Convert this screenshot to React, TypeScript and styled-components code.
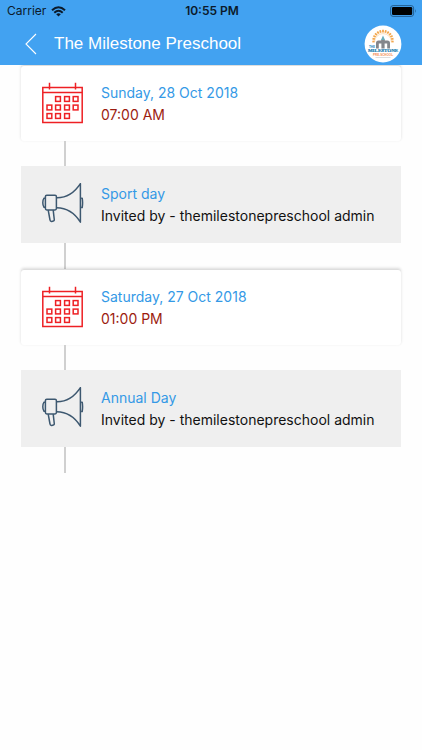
import React from 'react';
import styled, { createGlobalStyle } from 'styled-components';

const GlobalStyle = createGlobalStyle`
  * { box-sizing: border-box; }
  body {
    margin: 0;
    background: #fefefe;
    font-family: Inter, "Liberation Sans", sans-serif;
  }
`;

const Header = styled.header`
  background: #42a2f1;
  position: relative;
  z-index: 1;
`;

const StatusBar = styled.div`
  display: grid;
  grid-template-columns: 1fr auto 1fr;
  align-items: center;
  height: 22px;
  padding: 0 5px 0 7px;
  font-size: 12px;
  line-height: 22px;
  color: #0b1a2b;
`;

const Carrier = styled.span`
  display: flex;
  align-items: center;
  gap: 5px;
`;

const Clock = styled.time`
  font-weight: 600;
`;

const BatteryIcon = styled.svg`
  justify-self: end;
`;

const NavBar = styled.div`
  display: flex;
  align-items: center;
  height: 43px;
  padding: 0 20px 0 21px;
`;

const BackButton = styled.button`
  display: flex;
  padding: 0;
  border: 0;
  background: none;
  color: #fff;
  cursor: pointer;
`;

const Title = styled.h1`
  flex: 1;
  margin: 0 0 0 13px;
  font: 400 17px/22px "Liberation Sans", Arial, sans-serif;
  color: #fff;
`;

const Logo = styled.svg`
  flex: none;
`;

const Timeline = styled.ol`
  list-style: none;
  margin: 0;
  padding: 0 21px;
`;

const Entry = styled.li<{ $raised?: boolean }>`
  &::after {
    content: '';
    display: block;
    width: 2px;
    height: ${(p) => (p.$raised ? 25 : 26)}px;
    margin-left: 43px;
    background: #d0d0d0;
  }
`;

const Card = styled.article<{ $raised?: boolean }>`
  display: flex;
  gap: 17px;
  padding: 17px 21px 13px;
  min-height: ${(p) => (p.$raised ? 76 : 77)}px;
  background: ${(p) => (p.$raised ? '#fff' : '#efefef')};
  border-radius: ${(p) => (p.$raised ? 3 : 0)}px;
  box-shadow: ${(p) =>
    p.$raised ? 'inset 0 1px 0 #dedede, 0 -1px 3px rgba(0, 0, 0, 0.14)' : 'none'};
`;

const CardIcon = styled.svg`
  flex: none;
  width: 42px;
  height: 42px;
  fill: none;
`;

const Details = styled.div`
  font-size: 14px;
  line-height: 22px;
`;

const Heading = styled.h2`
  margin: 0;
  font: inherit;
  color: #3499e6;
`;

const Line = styled.p<{ $color: string }>`
  margin: 0;
  color: ${(p) => p.$color};
`;

const dots = [
  [16, 17], [25, 17], [33.6, 17],
  [7.4, 25.5], [16, 25.5], [25, 25.5], [33.6, 25.5],
  [7.4, 34], [16, 34], [25, 34],
];

const CalendarIcon = () => (
  <CardIcon viewBox="0 0 42 42" stroke="#ee2024" strokeWidth="1.5" aria-hidden="true">
    <path d="M.8 5.6H40.2V40.6H.8ZM.8 10.4H40.2M7.5 .8V7.5M33.5 .8V7.5" />
    {dots.map(([x, y]) => (
      <rect key={`${x}-${y}`} x={x - 2.4} y={y - 2.4} width="4.8" height="4.8" />
    ))}
  </CardIcon>
);

const MegaphoneIcon = () => (
  <CardIcon viewBox="0 0 42 42" stroke="#3d5870" strokeWidth="1.5" strokeLinejoin="round" aria-hidden="true">
    <rect x="3.4" y="12.2" width="11" height="14.8" rx="1.4" />
    <path d="M3.2 15.2H2Q.8 17 .8 19.8T2 24.2H3.2M14.6 14.8C25 15 33 9 38.4 .7V39.2C33 30.5 25 25 14.6 24.8M39.2 15.2H40.2Q41 19.8 40.2 24.6H39.2" />
    <path d="M6.2 27.2L8 37Q8.2 38.6 9.8 38.4L11.4 38.1Q12.4 37.8 12.3 36.8L11.2 27.2" />
  </CardIcon>
);

const rays = Array.from({ length: 13 }, (_, i) => -96 + i * 16);

const SchoolLogo = () => (
  <Logo width="38" height="38" viewBox="0 0 38 38" role="img" aria-label="The Milestone Preschool">
    <circle cx="19" cy="19" r="18.4" fill="#fff" />
    {rays.map((a) => (
      <path key={a} d="M19 7.4V4.8" stroke="#f3a64b" strokeWidth="1.8" transform={`rotate(${a} 19 15.5)`} />
    ))}
    <path d="M10.6 17A8.4 8.4 0 0 1 27.4 17" fill="none" stroke="#f9d4a4" strokeWidth=".7" />
    <path d="M12 23.6V18Q12 15.5 14.5 15.5H17L19 12.5L21 15.5H23.5Q26 15.5 26 18V23.6H23.2V18.6H20.6V23.6H17.4V18.6H14.8V23.6Z" fill="#83868b" />
    <path d="M19 10.5L21 15H17Z" fill="#68aebb" />
    <text x="5" y="22.8" fontFamily="Liberation Sans" fontSize="3" fontWeight="700" fill="#2185ba">THE</text>
    <text x="19" y="27.4" textAnchor="middle" fontFamily="Liberation Serif" fontSize="5" fontWeight="700" fill="#1479ae" stroke="#1479ae" strokeWidth=".2">MILESTONE</text>
    <text x="19" y="31" textAnchor="middle" fontFamily="Liberation Sans" fontSize="3" fontWeight="700" fill="#f48a50">PRE-SCHOOL</text>
    <path d="M11.5 32.5H26.5" stroke="#c8c8c8" strokeWidth=".6" />
  </Logo>
);

type Item = { kind: 'date' | 'event'; heading: string; detail: string };

const items: Item[] = [
  { kind: 'date', heading: 'Sunday, 28 Oct 2018', detail: '07:00 AM' },
  { kind: 'event', heading: 'Sport day', detail: 'Invited by - themilestonepreschool admin' },
  { kind: 'date', heading: 'Saturday, 27 Oct 2018', detail: '01:00 PM' },
  { kind: 'event', heading: 'Annual Day', detail: 'Invited by - themilestonepreschool admin' },
];

export default function App() {
  return (
    <>
      <GlobalStyle />
      <Header>
        <StatusBar>
          <Carrier>
            Carrier
            <svg width="15" height="11" viewBox="0 0 15 11" fill="none" stroke="#0b1a2b" strokeWidth="2" aria-hidden="true">
              <path d="M1 4.2Q7.5 -1.8 14 4.2M3.3 6.7Q7.5 2.9 11.7 6.7" />
              <path d="M7.5 10.6L5.2 8.3Q7.5 6.4 9.8 8.3Z" fill="#0b1a2b" stroke="none" />
            </svg>
          </Carrier>
          <Clock>10:55 PM</Clock>
          <BatteryIcon width="27" height="12" viewBox="0 0 27 12" aria-hidden="true">
            <rect x=".6" y=".6" width="23" height="10.8" rx="2.5" fill="none" stroke="#235f91" strokeWidth="1" />
            <rect x="2" y="2" width="20.2" height="8" rx="1.2" fill="#000" />
            <path d="M25 4Q26.6 6 25 8Z" fill="#235f91" />
          </BatteryIcon>
        </StatusBar>
        <NavBar>
          <BackButton aria-label="Back">
            <svg width="20" height="22" viewBox="0 0 20 22" fill="none" stroke="currentColor" strokeWidth="1.1">
              <path d="M15 1L5 11L15 21" />
            </svg>
          </BackButton>
          <Title>The Milestone Preschool</Title>
          <SchoolLogo />
        </NavBar>
      </Header>
      <main>
        <Timeline>
          {items.map((item) => {
            const isDate = item.kind === 'date';
            return (
              <Entry key={item.heading} $raised={isDate}>
                <Card $raised={isDate}>
                  {isDate ? <CalendarIcon /> : <MegaphoneIcon />}
                  <Details>
                    <Heading>{item.heading}</Heading>
                    <Line $color={isDate ? '#9c1c10' : '#111'}>{item.detail}</Line>
                  </Details>
                </Card>
              </Entry>
            );
          })}
        </Timeline>
      </main>
    </>
  );
}
